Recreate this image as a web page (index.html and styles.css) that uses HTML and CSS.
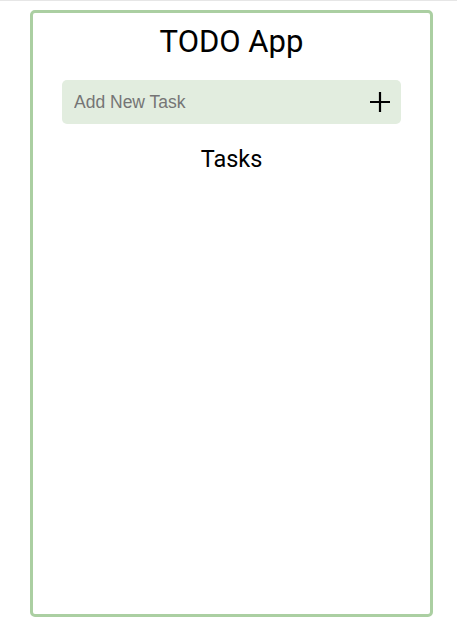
FILE: index.html
```html
<!DOCTYPE html>
<html>
<head>
<meta charset="utf-8">
<link rel="stylesheet" href="styles.css">
</head>
<body>
<div class="page">
  <main class="card">
    <h1 class="title">TODO App</h1>
    <form class="add-form">
      <input class="add-input" type="text" placeholder="Add New Task">
      <button class="add-btn" type="button" aria-label="Add">
        <svg width="20" height="20" viewBox="0 0 20 20"><path d="M10 0v20M0 10h20" stroke="#000" stroke-width="2.2" fill="none"/></svg>
      </button>
    </form>
    <h2 class="tasks-title">Tasks</h2>
    <ul class="task-list"></ul>
  </main>
</div>
</body>
</html>
```
FILE: styles.css
```css
html, body {
  margin: 0;
  padding: 0;
  background: #fff;
}
body {
  border-top: 1px solid #e6e6e6;
  font-family: Roboto, "Liberation Sans", sans-serif;
}
.page {
  padding: 9px 24px 16px 30px;
}
.card {
  box-sizing: border-box;
  width: 403px;
  height: 607px;
  border: 3px solid #abcfa2;
  border-radius: 5px;
  display: flex;
  flex-direction: column;
  align-items: center;
}
.title {
  margin: 9px 0 0;
  font-size: 31px;
  font-weight: 400;
  line-height: 40px;
  color: #000;
}
.add-form {
  margin-top: 18px;
  width: 339px;
  height: 44px;
  box-sizing: border-box;
  background: #e2eddf;
  border-radius: 5px;
  display: flex;
  align-items: center;
  padding: 0 11px 0 12px;
}
.add-input {
  flex: 1;
  border: none;
  background: transparent;
  outline: none;
  font-family: "Liberation Sans", Arial, sans-serif;
  font-size: 17.5px;
  color: #333;
  padding: 0;
}
.add-input::placeholder {
  color: #757575;
}
.add-btn {
  border: none;
  background: transparent;
  padding: 0;
  width: 20px;
  height: 20px;
  display: flex;
}
.tasks-title {
  margin: 20px 0 0;
  font-size: 23.5px;
  font-weight: 400;
  line-height: 30px;
}
.task-list {
  margin: 0;
  padding: 0;
  list-style: none;
}
```
